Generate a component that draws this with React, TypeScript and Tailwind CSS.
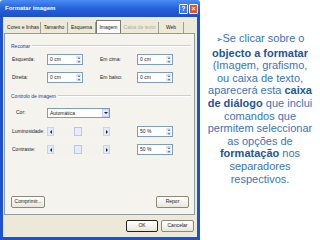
import React from 'react'

const ui = { fontFamily: '"Liberation Sans", Arial, sans-serif' }

function Spin({ value }: { value: string }) {
  return (
    <div className="flex h-[11px] w-[36px] items-center border border-[#7f9db9] bg-white">
      <span className="flex-1 pl-[2px] text-[5px] leading-none text-[#222]">{value}</span>
      <div className="flex h-full w-[7px] flex-col gap-px p-px">
        <div className="flex flex-1 items-center justify-center rounded-[1px] bg-[#d8e2f4]">
          <div className="h-0 w-0 border-x-[1.5px] border-b-[2px] border-x-transparent border-b-[#4d6185]" />
        </div>
        <div className="flex flex-1 items-center justify-center rounded-[1px] bg-[#d8e2f4]">
          <div className="h-0 w-0 border-x-[1.5px] border-t-[2px] border-x-transparent border-t-[#4d6185]" />
        </div>
      </div>
    </div>
  )
}

function Scroll() {
  return (
    <div className="flex h-[9px] w-[63px] items-center bg-[#f3f2ec]">
      <div className="flex h-full w-[7px] items-center justify-center border border-[#c3d3fd] bg-[#e3ebfd]">
        <div className="h-0 w-0 border-y-[2px] border-r-[2px] border-y-transparent border-r-[#222]" />
      </div>
      <div className="flex h-full flex-1 items-center pl-[20px]">
        <div className="h-full w-[8px] border border-[#b9c7ea] bg-[#e6ecfb]" />
      </div>
      <div className="flex h-full w-[7px] items-center justify-center border border-[#c3d3fd] bg-[#e3ebfd]">
        <div className="h-0 w-0 border-y-[2px] border-l-[2px] border-y-transparent border-l-[#222]" />
      </div>
    </div>
  )
}

function Group({ title }: { title: string }) {
  return (
    <div className="flex h-[10px] items-center gap-[2px] pl-[3px]">
      <span className="text-[5px] leading-none text-[#1a3f9c]">{title}</span>
      <div className="flex-1 border-t border-b border-t-[#d0d0bf] border-b-white" />
    </div>
  )
}

function Btn({ label, focus, w }: { label: string; focus?: boolean; w: string }) {
  return (
    <div
      className={`flex h-[12px] items-center justify-center rounded-[2px] border bg-gradient-to-b from-white to-[#e8e6dc] text-[5px] text-[#222] ${w} ${
        focus ? 'border-[#222]' : 'border-[#8a8a7a]'
      }`}
    >
      {label}
    </div>
  )
}

const tabs = [
  { t: 'Cores e linhas', w: 'w-[35px]' },
  { t: 'Tamanho', w: 'w-[27px]' },
  { t: 'Esquema', w: 'w-[28px]' },
  { t: 'Imagem', w: 'w-[25px]', on: true },
  { t: 'Caixa de texto', w: 'w-[38px]', off: true },
  { t: 'Web', w: 'w-[25px]' },
]

function Dialog() {
  return (
    <div className="flex h-[240px] w-[200px] shrink-0 flex-col" style={ui}>
      {/* title bar */}
      <div className="flex h-[17px] items-center justify-between rounded-t-[3px] bg-gradient-to-b from-[#4a8cf2] via-[#2561dc] to-[#1c4fc6] pl-[5px] pr-[2px]">
        <span className="text-[6px] font-bold text-white">Formatar imagem</span>
        <div className="flex gap-px">
          <div className="flex h-[10px] w-[9px] items-center justify-center rounded-[1px] border border-white bg-[#3d78e6] text-[7px] font-bold leading-none text-white">?</div>
          <div className="flex h-[10px] w-[9px] items-center justify-center rounded-[1px] border border-white bg-[#e2532a] text-[7px] font-bold leading-none text-white">×</div>
        </div>
      </div>

      <div className="flex flex-1 flex-col border-x-[3px] border-b-[3px] border-[#1c52d0] bg-[#ece9d8] pt-[3px] pl-px pr-[2px]">
        {/* tabs */}
        <div className="flex h-[13px] items-end pl-[2px]">
          {tabs.map((tab) => (
            <div
              key={tab.t}
              className={`flex items-center justify-center text-[5px] leading-none ${tab.w} ${
                tab.on
                  ? 'h-[13px] border border-b-0 border-[#7a7a70] bg-[#fcfcfa] text-[#222]'
                  : 'h-[11px] border-r border-[#a0a090] text-[#222]'
              } ${tab.off ? 'text-[#b0ad9c]' : ''}`}
            >
              {tab.t}
            </div>
          ))}
        </div>

        {/* panel */}
        <div className="flex h-[182px] flex-col border border-[#919b9c] bg-[#f4f3ee] px-[3px] pt-[7px] pb-[6px]">
          <Group title="Recortar" />
          <div className="mt-[3px] grid grid-cols-[35px_36px_17px_37px_36px] gap-y-[7px] pl-[4px] text-[5px] text-[#222]">
            <span className="self-center">Esquerda:</span>
            <Spin value="0 cm" />
            <span />
            <span className="self-center">Em cima:</span>
            <Spin value="0 cm" />
            <span className="self-center">Direita:</span>
            <Spin value="0 cm" />
            <span />
            <span className="self-center">Em baixo:</span>
            <Spin value="0 cm" />
          </div>

          <div className="mt-[8px]">
            <Group title="Controlo de imagem" />
          </div>
          <div className="mt-[7px] flex items-center pl-[4px] text-[5px] text-[#222]">
            <span className="w-[35px] pl-[4px]">Cor:</span>
            <div className="flex h-[10px] w-[63px] items-center border border-[#7f9db9] bg-white">
              <span className="flex-1 pl-[2px] leading-none">Automática</span>
              <div className="flex h-full w-[7px] items-center justify-center border border-[#c3d3fd] bg-[#e3ebfd]">
                <div className="h-0 w-0 border-x-[2px] border-t-[2px] border-x-transparent border-t-[#222]" />
              </div>
            </div>
          </div>
          <div className="mt-[8px] flex items-center pl-[4px] text-[5px] text-[#222]">
            <span className="w-[35px]">Luminosidade:</span>
            <Scroll />
            <span className="w-[27px]" />
            <Spin value="50 %" />
          </div>
          <div className="mt-[7px] flex items-center pl-[4px] text-[5px] text-[#222]">
            <span className="w-[35px]">Contraste:</span>
            <Scroll />
            <span className="w-[27px]" />
            <Spin value="50 %" />
          </div>

          <div className="mt-auto flex items-end justify-between pl-[3px] pr-[2px]">
            <Btn label="Comprimir..." w="w-[34px]" />
            <Btn label="Repor" w="w-[33px]" />
          </div>
        </div>

        {/* bottom buttons */}
        <div className="mt-[5px] flex justify-end gap-[3px] pr-[1px]">
          <Btn label="OK" w="w-[32px]" focus />
          <Btn label="Cancelar" w="w-[33px]" />
        </div>
      </div>
    </div>
  )
}

const B = ({ children }: { children: React.ReactNode }) => <b className="text-[#1f5597]">{children}</b>

export default function App() {
  return (
    <div className="flex h-[240px] w-[320px] overflow-hidden bg-white">
      <Dialog />
      <div
        className="flex flex-1 flex-col items-center pt-[32px] text-[11px] leading-[12.6px] whitespace-nowrap text-[#3a74ba]"
        style={{ fontFamily: '"Liberation Sans", Arial, sans-serif' }}
      >
        <div>
          <span className="text-[8px] text-[#2a5fa8]">➢</span>Se clicar sobre o
        </div>
        <div>
          <B>objecto a formatar</B>
        </div>
        <div>(Imagem, grafismo,</div>
        <div>ou caixa de texto,</div>
        <div>
          aparecerá esta <B>caixa</B>
        </div>
        <div>
          <B>de diálogo</B> que inclui
        </div>
        <div>comandos que</div>
        <div>permitem seleccionar</div>
        <div>as opções de</div>
        <div>
          <B>formatação</B> nos
        </div>
        <div>separadores</div>
        <div>respectivos.</div>
      </div>
    </div>
  )
}
